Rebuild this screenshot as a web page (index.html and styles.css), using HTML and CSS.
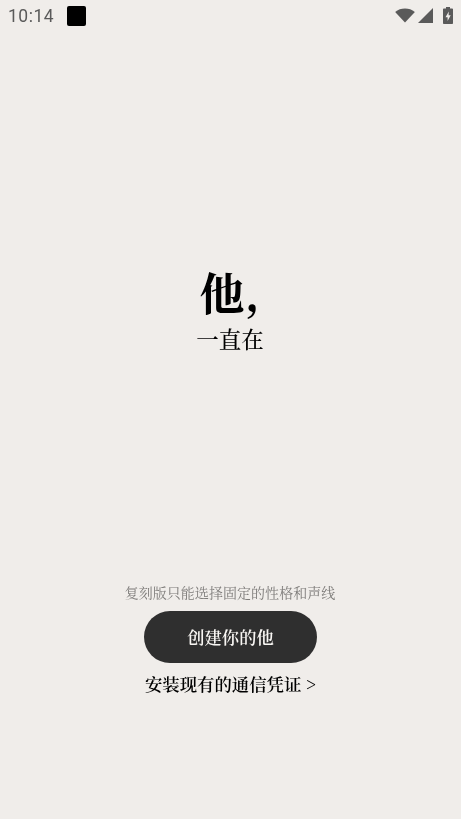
FILE: index.html
```html
<!DOCTYPE html>
<html lang="zh-CN">
<head>
<meta charset="utf-8">
<title>他,一直在</title>
<link rel="stylesheet" href="styles.css">
</head>
<body>
<div class="screen">
  <header class="status">
    <div class="status-left">
      <span class="time">10:14</span>
      <span class="square"></span>
    </div>
    <div class="status-right">
      <svg class="wifi" width="20" height="15" viewBox="0 0 21 16"><path d="M0 4.2C3 1.6 6.5 0.5 10.5 0.5S18 1.6 21 4.2L10.5 15.5Z"/></svg>
      <svg class="signal" width="15" height="15" viewBox="0 0 15 15"><path d="M15 0V15H0Z"/></svg>
      <svg class="battery" width="10" height="17" viewBox="0 0 10 17"><path fill-rule="evenodd" d="M3 0H7V1.5H9.2C9.7 1.5 10 1.8 10 2.3V16.2C10 16.7 9.7 17 9.2 17H.8C.3 17 0 16.7 0 16.2V2.3C0 1.8.3 1.5.8 1.5H3ZM5.8 4.5L2.5 10.2H4.6V14L7.7 8.2H5.6Z"/></svg>
    </div>
  </header>
  <main class="hero">
    <h1 class="title">他,</h1>
    <p class="subtitle">一直在</p>
  </main>
  <section class="actions">
    <p class="note">复刻版只能选择固定的性格和声线</p>
    <button class="primary">创建你的他</button>
    <a class="link">安装现有的通信凭证 &gt;</a>
  </section>
</div>
</body>
</html>
```
FILE: styles.css
```css
* { box-sizing: border-box; }
html, body { margin: 0; padding: 0; }
body {
  width: 461px;
  height: 819px;
  overflow: hidden;
  background: #f0edea;
  font-family: "Noto Serif CJK SC", "Liberation Serif", serif;
  color: #000;
}
.screen { display: flex; flex-direction: column; height: 819px; will-change: transform; }
.status {
  height: 31px;
  display: flex;
  justify-content: space-between;
  align-items: center;
  padding: 0 8px;
  flex: none;
}
.status-left { display: flex; align-items: center; gap: 13px; }
.time { font: 17.5px "Roboto", sans-serif; color: #5a5a5a; letter-spacing: 0.5px; }
.square { width: 19px; height: 20px; background: #000; border-radius: 2px; }
.status-right { display: flex; align-items: center; }
.status-right svg { fill: #5a5a5a; display: block; }
.signal { margin-left: 3px; margin-right: 10px; }
.hero { height: 329px; padding-top: 232px; flex: none; text-align: center; }
.title { margin: 0 2px 0 0; font-size: 45px; line-height: 57px; font-weight: 700; }
.subtitle { margin: 1px 1px 0 0; font-size: 22.5px; line-height: 34px; font-weight: 500; }
.actions { margin-top: 222px; display: flex; flex-direction: column; align-items: center; }
.note { margin: 0 1px 0 0; font-size: 14px; letter-spacing: 0.05px; line-height: 20px; color: #7e7c7a; }
.primary {
  margin-top: 9px;
  width: 173px;
  height: 52px;
  border: 0;
  padding: 0 0 2px;
  border-radius: 26px;
  background: #2f2f2f;
  color: #f8f6f3;
  font: inherit;
  font-size: 17.3px;
  font-weight: 600;
}
.link { margin-top: 9px; font-size: 17.4px; line-height: 24px; color: #000; font-weight: 600; }
```
